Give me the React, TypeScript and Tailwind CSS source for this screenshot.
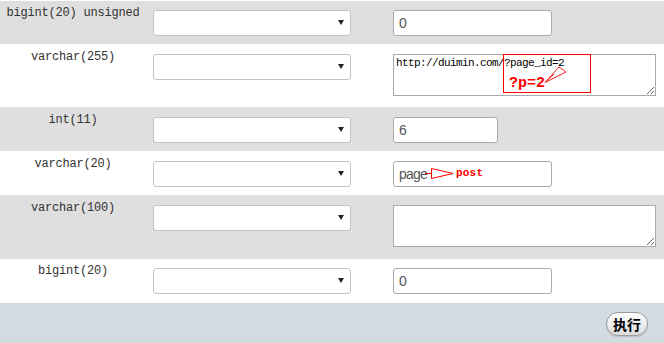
import React from "react";

const mono = "font-['Liberation_Mono','DejaVu_Sans_Mono',monospace]";

function FakeSelect() {
    return (
        <div className="relative ml-[7px] h-[26px] w-[198px] shrink-0 rounded-[3px] border border-[#c4c4c4] bg-white">
            <svg className="absolute right-[6px] top-[9px]" width="6" height="5" viewBox="0 0 6 5">
                <polygon points="0,0 6,0 3,5" fill="#222" />
            </svg>
        </div>
    );
}

function Row({
    label,
    gray,
    height,
    pad,
    children,
}: {
    label: string;
    gray?: boolean;
    height: string;
    pad: string;
    children: React.ReactNode;
}) {
    return (
        <div className={`flex items-start ${height} ${pad} ${gray ? "bg-[#dfdfdf]" : "bg-white"}`}>
            <div className={`-mt-[6px] w-[146px] shrink-0 text-center text-[12px] leading-[18px] tracking-[-0.2px] text-[#333] ${mono}`}>
                {label}
            </div>
            <FakeSelect />
            <div className="ml-[42px]">{children}</div>
        </div>
    );
}

function TextInput({ value, width, children }: { value: string; width: string; children?: React.ReactNode }) {
    return (
        <div className={`relative h-[26px] ${width}`}>
            <input
                readOnly
                defaultValue={value}
                className="h-full w-full rounded-[3px] border border-[#aaaaaa] bg-white px-[5px] font-['Liberation_Sans',Arial,sans-serif] text-[14px] tracking-[-0.8px] text-[#555] outline-none"
            />
            {children}
        </div>
    );
}

function TextArea({ value, children }: { value?: string; children?: React.ReactNode }) {
    return (
        <div className="relative h-[42px] w-[263px]">
            <textarea
                readOnly
                defaultValue={value}
                className={`block h-full w-full resize rounded-none border border-[#aaaaaa] bg-white px-[2px] pt-[1px] text-[11px] leading-[14px] tracking-[-0.6px] text-black outline-none ${mono}`}
            />
            {children}
        </div>
    );
}

export default function App() {
    return (
        <div className="h-[343px] w-[664px] overflow-hidden bg-white pt-px">
            <Row label="bigint(20) unsigned" gray height="h-[43px]" pad="pt-[9px]">
                <TextInput value="0" width="w-[159px]" />
            </Row>

            <Row label="varchar(255)" height="h-[63px]" pad="pt-[10px]">
                <TextArea value="http://duimin.com/?page_id=2">
                    <div className="pointer-events-none absolute left-[110px] top-0 h-[39px] w-[88px] border border-[#ff0000]">
                        <span className={`absolute left-[5px] top-[21px] text-[15px] font-bold leading-none text-[#ff0000] ${mono}`}>
                            ?p=2
                        </span>
                        <svg className="absolute left-0 top-0" width="88" height="39" viewBox="0 0 88 39">
                            <polygon points="41,27.5 62,17 55,12" fill="none" stroke="#ff2020" strokeWidth="1" />
                            <line x1="41" y1="27.5" x2="50" y2="19" stroke="#ff2020" strokeWidth="1" />
                        </svg>
                    </div>
                </TextArea>
            </Row>

            <Row label="int(11)" gray height="h-[44px]" pad="pt-[10px]">
                <TextInput value="6" width="w-[105px]" />
            </Row>

            <Row label="varchar(20)" height="h-[44px]" pad="pt-[10px]">
                <TextInput value="page" width="w-[159px]">
                    <svg className="pointer-events-none absolute left-0 top-0" width="62" height="26" viewBox="0 0 62 26">
                        <line x1="32" y1="12.5" x2="39" y2="12.5" stroke="#ff0000" strokeWidth="1" />
                        <polygon points="38.5,7.5 38.5,17.5 60,12.5" fill="none" stroke="#ff0000" strokeWidth="1" />
                    </svg>
                    <span className={`pointer-events-none absolute left-[63px] top-[7px] text-[11px] font-bold leading-none tracking-[0.2px] text-[#ff0000] ${mono}`}>
                        post
                    </span>
                </TextInput>
            </Row>

            <Row label="varchar(100)" gray height="h-[64px]" pad="pt-[10px]">
                <TextArea />
            </Row>

            <Row label="bigint(20)" height="h-[44px]" pad="pt-[9px]">
                <TextInput value="0" width="w-[159px]" />
            </Row>

            <div className="flex h-[40px] justify-end bg-[#d3dbe2] pr-[16px] pt-[9px]">
                <button className="h-[24px] w-[42px] rounded-full border border-[#9a9a9a] bg-gradient-to-b from-white to-[#dcdcdc] font-['Noto_Sans_CJK_SC',sans-serif] text-[14px] font-bold leading-none text-black shadow-[0_1px_1px_rgba(0,0,0,0.15)]">
                    执行
                </button>
            </div>
        </div>
    );
}
